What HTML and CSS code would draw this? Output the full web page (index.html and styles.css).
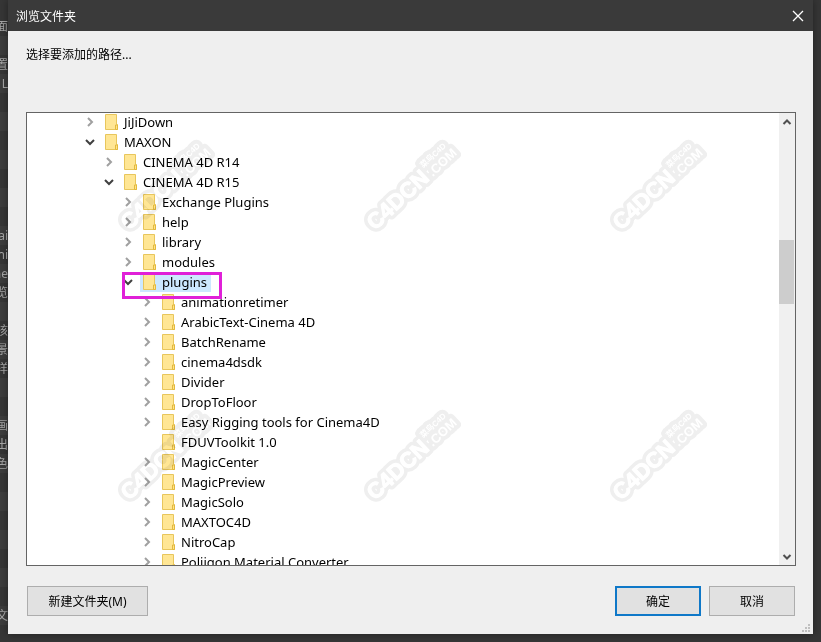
FILE: index.html
```html
<!DOCTYPE html>
<html lang="zh-CN">
<head>
    <meta charset="UTF-8">
    <meta name="viewport" content="width=device-width, initial-scale=1.0">
    <title>浏览文件夹</title>
    <link rel="stylesheet" href="styles.css">
</head>
<body>
    <!-- shared shapes -->
    <svg class="defs" aria-hidden="true">
        <symbol id="closed" viewBox="0 0 12 12">
            <path d="M4 2l4 4-4 4" fill="none" stroke="#a0a0a0" stroke-width="2"/>
        </symbol>
        <symbol id="open" viewBox="0 0 12 12">
            <path d="M2 4l4 4 4-4" fill="none" stroke="#404040" stroke-width="2"/>
        </symbol>
        <symbol id="folder" viewBox="0 0 14 16">
            <path d="M.5.5h11v10h1v5H.5z" fill="#ffe694" stroke="#e8c65c"/>
            <path d="M10.500 15.500v-4.500h2v4.500z" fill="#ffe38a" stroke="#e3b93c"/>
        </symbol>
        <symbol id="mark" viewBox="0 0 110 110">
            <g transform="translate(24 99) rotate(-43)" stroke-linejoin="round">
                <g fill="#efefef" stroke="#efefef" stroke-width="8">
                    <text class="mark-big" x="0" y="0">C4DCN</text>
                    <text class="mark-com" x="79" y="0">.COM</text>
                    <text class="mark-small" x="78" y="-13">菜鸟C4D</text>
                </g>
                <g fill="#fff">
                    <text class="mark-big" x="0" y="0" stroke="#fff">C4DCN</text>
                    <text class="mark-com" x="79" y="0">.COM</text>
                    <text class="mark-small" x="78" y="-13">菜鸟C4D</text>
                </g>
            </g>
        </symbol>
    </svg>

    <ul class="backdrop" id="backdrop" aria-hidden="true"></ul>

    <div class="dialog" role="dialog" aria-labelledby="title">
        <header class="titlebar">
            <h1 id="title">浏览文件夹</h1>
            <button class="close" aria-label="关闭">
                <svg width="12" height="12" viewBox="0 0 12 12"><path d="M1 1l10 10M11 1L1 11" stroke="#fff" stroke-width="1.300"/></svg>
            </button>
        </header>

        <main class="content">
            <p class="prompt">选择要添加的路径...</p>

            <div class="tree-box">
                <ul class="tree" id="tree" role="tree"></ul>
                <div class="scrollbar">
                    <svg width="10" height="8" viewBox="0 0 10 8"><path d="M1.500 6L5 2.500 8.500 6" fill="none" stroke="#505050" stroke-width="2"/></svg>
                    <div class="track"><div class="thumb"></div></div>
                    <svg width="10" height="8" viewBox="0 0 10 8"><path d="M1.500 2L5 5.500 8.500 2" fill="none" stroke="#505050" stroke-width="2"/></svg>
                </div>
                <div class="marks" aria-hidden="true">
                    <svg><use href="#mark"/></svg>
                    <svg><use href="#mark"/></svg>
                    <svg><use href="#mark"/></svg>
                    <svg><use href="#mark"/></svg>
                    <svg><use href="#mark"/></svg>
                    <svg><use href="#mark"/></svg>
                </div>
            </div>

            <footer class="actions">
                <button class="btn new-folder">新建文件夹(M)</button>
                <button class="btn primary">确定</button>
                <button class="btn">取消</button>
            </footer>
        </main>

        <svg class="grip" width="8" height="8" viewBox="0 0 8 8" fill="#bfbfbf">
            <path d="M6 0h2v2H6zM3 3h2v2H3zM6 3h2v2H6zM0 6h2v2H0zM3 6h2v2H3zM6 6h2v2H6z"/>
        </svg>
    </div>

    <script src="tree.js"></script>
</body>
</html>
```
FILE: styles.css
```css
* {
    box-sizing: border-box;
}
body {
    display: flex;
    min-height: 100vh;
    margin: 0;
    padding: 0 8px 8px 0;
    background: #363636;
    font-family: "Noto Sans", "Noto Sans CJK SC", sans-serif;
    font-size: 12px;
    color: #000;
    overflow: hidden;
}
ul {
    list-style: none;
    margin: 0;
    padding: 0;
}
.defs {
    position: absolute;
    width: 0;
    height: 0;
}

/* window behind the dialog */
.backdrop {
    flex: 0 0 8px;
    padding-top: 17px;
    margin-bottom: -8px;
    color: #a8a8a8;
    overflow: hidden;
}
.backdrop li {
    display: flex;
    justify-content: flex-end;
    height: 19px;
    line-height: 19px;
    overflow: hidden;
}
.backdrop li:nth-child(even) {
    background: #3d3d3d;
}

/* dialog */
.dialog {
    position: relative;
    display: flex;
    flex-direction: column;
    flex: 1;
    min-width: 0;
    background: #efefef;
    box-shadow: 0 0 8px rgba(0,0,0,0.4);
}
.titlebar {
    display: flex;
    align-items: center;
    justify-content: space-between;
    height: 31px;
    padding: 0 9px 0 8px;
    background: #3a3a3a;
    color: #fff;
}
.titlebar h1 {
    margin: 0;
    font-size: 12px;
    font-weight: normal;
}
.close {
    display: flex;
    padding: 0;
    border: 0;
    background: none;
}
.content {
    display: flex;
    flex-direction: column;
    flex: 1;
    padding: 14px 17px 18px 18px;
}
.prompt {
    margin: 0 0 47px;
    line-height: 20px;
}

/* folder tree */
.tree-box {
    position: relative;
    display: flex;
    flex: 1 0 0;
    min-height: 0;
    border: 1px solid #646464;
    background: #fff;
    overflow: hidden;
}
.tree {
    flex: 1;
    height: 0;
    margin-top: -1px;
    font-size: 13px;
}
.tree ul {
    padding-left: 19px;
}
.tree > li {
    padding-left: 57px;
}
.row {
    display: flex;
    align-items: center;
    height: 20px;
    line-height: 20px;
    white-space: nowrap;
}
.arrow {
    flex: none;
    width: 12px;
    height: 12px;
    margin-right: 6px;
}
.label {
    display: flex;
    align-items: center;
    gap: 5px;
    height: 20px;
    padding: 0 4px 0 3px;
}
.label svg {
    width: 14px;
    height: 16px;
}
.selected {
    position: relative;
}
.selected .label {
    background: #cce8ff;
}
.selected::after {
    content: "";
    position: absolute;
    top: 0;
    left: 0;
    box-sizing: border-box;
    width: 100px;
    height: 27px;
    border: 3px solid #e020d8;
}
.scrollbar {
    display: flex;
    flex-direction: column;
    align-items: center;
    width: 16px;
    padding: 5px 0 4px;
    background: #f0f0f0;
}
.track {
    flex: 1;
    width: 100%;
    padding-right: 1px;
}
.thumb {
    height: 15%;
    margin-top: 114px;
    background: #cdcdcd;
}

/* watermark */
.marks {
    position: absolute;
    inset: 19px 88px 0 78px;
    display: grid;
    grid-template-columns: repeat(3, 110px);
    grid-auto-rows: 270px;
    justify-content: space-between;
    mix-blend-mode: multiply;
    pointer-events: none;
}
.marks svg {
    width: 110px;
    height: 110px;
}
.mark-big {
    font: bold 22px "Liberation Sans", sans-serif;
}
.mark-com {
    font: bold 13px "Liberation Sans", sans-serif;
}
.mark-small {
    font: bold 8px "Liberation Sans", "Noto Sans CJK SC", sans-serif;
}

/* buttons */
.actions {
    display: flex;
    gap: 8px;
    padding: 20px 1px 0;
}
.btn {
    width: 86px;
    height: 30px;
    padding: 0;
    border: 1px solid #adadad;
    background: #e1e1e1;
    font: inherit;
    color: #000;
}
.btn.new-folder {
    width: 121px;
    margin-right: auto;
}
.btn.primary {
    border: 2px solid #0f78c8;
}
.grip {
    position: absolute;
    right: 3px;
    bottom: 2px;
}
```
FILE: tree.js
```js
const folders = [
    { name: 'JiJiDown' },
    { name: 'MAXON', children: [
        { name: 'CINEMA 4D R14' },
        { name: 'CINEMA 4D R15', children: [
            { name: 'Exchange Plugins' },
            { name: 'help' },
            { name: 'library' },
            { name: 'modules' },
            { name: 'plugins', selected: true, children: [
                { name: 'animationretimer' },
                { name: 'ArabicText-Cinema 4D' },
                { name: 'BatchRename' },
                { name: 'cinema4dsdk' },
                { name: 'Divider' },
                { name: 'DropToFloor' },
                { name: 'Easy Rigging tools for Cinema4D' },
                { name: 'FDUVToolkit 1.0', leaf: true },
                { name: 'MagicCenter' },
                { name: 'MagicPreview' },
                { name: 'MagicSolo' },
                { name: 'MAXTOC4D' },
                { name: 'NitroCap' },
                { name: 'Poliigon Material Converter' }
            ] }
        ] }
    ] }
];

function renderFolders(list, parent) {
    list.forEach(folder => {
        const li = document.createElement('li');
        const arrow = folder.leaf ? '' : `<use href="#${folder.children ? 'open' : 'closed'}"/>`;
        li.setAttribute('role', 'treeitem');
        li.innerHTML = `
            <div class="row${folder.selected ? ' selected' : ''}">
                <svg class="arrow">${arrow}</svg>
                <span class="label"><svg><use href="#folder"/></svg>${folder.name}</span>
            </div>`;
        parent.appendChild(li);

        if (folder.children) {
            const ul = document.createElement('ul');
            ul.setAttribute('role', 'group');
            li.appendChild(ul);
            renderFolders(folder.children, ul);
        }
    });
}

// row number -> end of the text that sticks out on the left
const behind = { 0: '面', 2: '置', 3: 'L', 11: 'ai', 12: 'ni', 13: 'ne', 14: '览', 16: '核', 17: '景', 18: '样', 21: '画', 22: '出', 23: '色', 31: '文' };

renderFolders(folders, document.getElementById('tree'));

for (let i = 0; i < 32; i++) {
    const li = document.createElement('li');
    li.textContent = behind[i] || '';
    document.getElementById('backdrop').appendChild(li);
}
```
